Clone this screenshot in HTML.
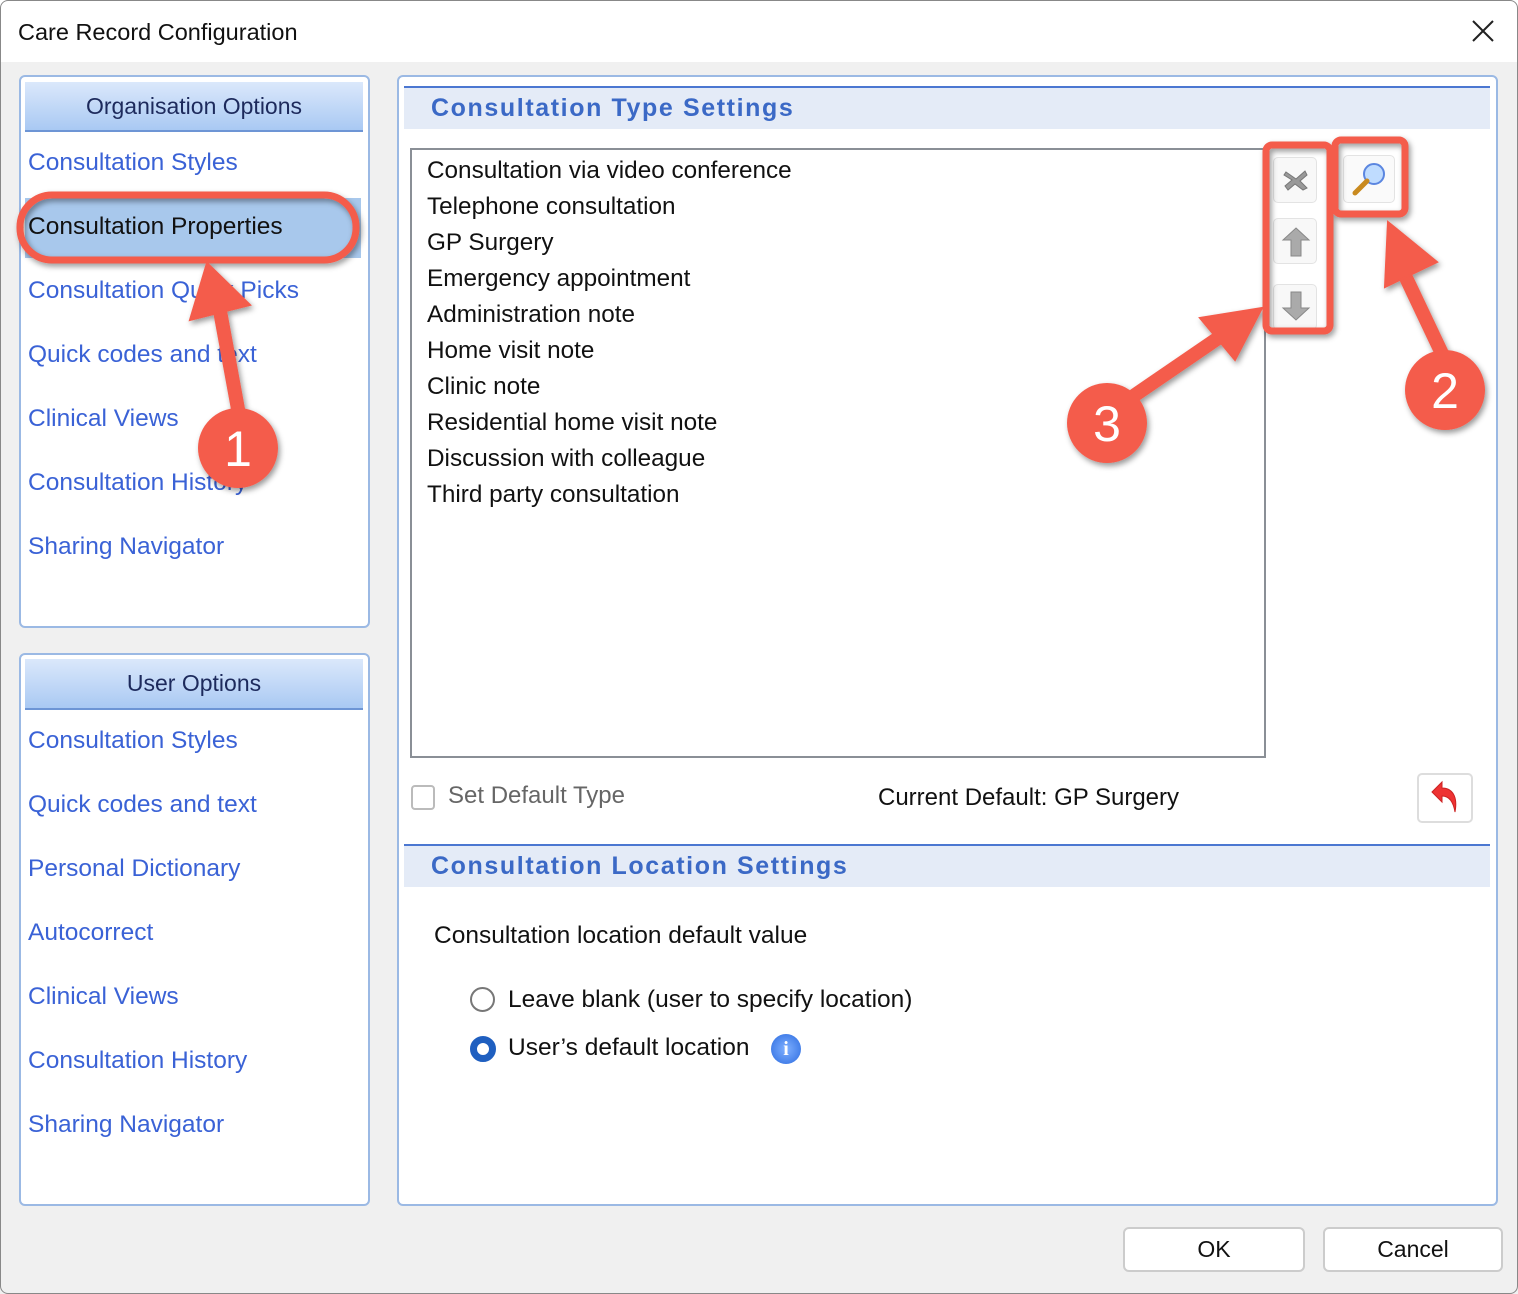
<!DOCTYPE html>
<html><head><meta charset="utf-8"><style>
*{margin:0;padding:0;box-sizing:border-box}
body{width:1518px;height:1294px;background:#fff;font-family:"Liberation Sans","DejaVu Sans",sans-serif;position:relative;overflow:hidden}
.a{position:absolute;white-space:nowrap}
#win{position:absolute;left:0;top:0;width:1518px;height:1294px;background:#f0f0f0;overflow:hidden}
#frame{position:absolute;left:0;top:0;width:1518px;height:1294px;border:1px solid #888;border-radius:8px}
#title{position:absolute;left:0;top:0;width:1518px;height:62px;background:#fff}
.panel{position:absolute;background:#fff;border:2px solid #9bb9e4;border-radius:6px}
.hdr{position:absolute;background:linear-gradient(#dbe8fb,#a9c9f3);border-bottom:2px solid #6d95d5;text-align:center;font-size:23px;color:#1d2a5c;line-height:48px}
.lnk{position:absolute;left:28px;font-size:24.5px;color:#3a62d6;line-height:30px}
.sec{position:absolute;left:404px;width:1086px;height:43px;background:#e4ebf7;border-top:2px solid #4b77d1;font-size:25px;letter-spacing:1.6px;font-weight:bold;color:#3b69c6;padding-left:27px;line-height:41px}
.li{position:absolute;left:427px;font-size:24.3px;color:#111;line-height:30px}
.btn{position:absolute;background:#fff;border:2px solid #ccc;border-radius:6px;text-align:center;font-size:23px;line-height:40px;color:#111}
.sb{position:absolute;width:44px;height:46px;background:#f8f8f8;border:1px solid #e3e3e3;border-radius:5px}
</style></head><body>
<div id="win">
<div id="title"></div>
<div class="a" style="left:18px;top:19px;font-size:23.5px;color:#111">Care Record Configuration</div>
<svg class="a" style="left:1470px;top:18px" width="26" height="26"><path d="M3 3L23 23M23 3L3 23" stroke="#222" stroke-width="2"/></svg>

<div class="panel" style="left:19px;top:75px;width:351px;height:553px"></div>
<div class="hdr" style="left:25px;top:82px;width:338px;height:50px">Organisation Options</div>
<div class="a" style="left:25px;top:198px;width:336px;height:60px;background:#a8c8ec"></div>
<div class="lnk" style="top:148px">Consultation Styles</div>
<div class="lnk" style="top:212px;color:#111">Consultation Properties</div>
<div class="lnk" style="top:276px">Consultation Quick Picks</div>
<div class="lnk" style="top:340px">Quick codes and text</div>
<div class="lnk" style="top:404px">Clinical Views</div>
<div class="lnk" style="top:468px">Consultation History</div>
<div class="lnk" style="top:532px">Sharing Navigator</div>

<div class="panel" style="left:19px;top:653px;width:351px;height:553px"></div>
<div class="hdr" style="left:25px;top:659px;width:338px;height:51px">User Options</div>
<div class="lnk" style="top:726px">Consultation Styles</div>
<div class="lnk" style="top:790px">Quick codes and text</div>
<div class="lnk" style="top:854px">Personal Dictionary</div>
<div class="lnk" style="top:918px">Autocorrect</div>
<div class="lnk" style="top:982px">Clinical Views</div>
<div class="lnk" style="top:1046px">Consultation History</div>
<div class="lnk" style="top:1110px">Sharing Navigator</div>

<div class="panel" style="left:397px;top:75px;width:1101px;height:1131px"></div>
<div class="sec" style="top:86px">Consultation Type Settings</div>
<div class="a" style="left:410px;top:148px;width:856px;height:610px;border:2px solid #8a8f96;background:#fff"></div>
<div class="li" style="top:156px">Consultation via video conference</div>
<div class="li" style="top:192px">Telephone consultation</div>
<div class="li" style="top:228px">GP Surgery</div>
<div class="li" style="top:264px">Emergency appointment</div>
<div class="li" style="top:300px">Administration note</div>
<div class="li" style="top:336px">Home visit note</div>
<div class="li" style="top:372px">Clinic note</div>
<div class="li" style="top:408px">Residential home visit note</div>
<div class="li" style="top:444px">Discussion with colleague</div>
<div class="li" style="top:480px">Third party consultation</div>

<div class="sb" style="left:1273px;top:157px"></div>
<div class="sb" style="left:1273px;top:218px"></div>
<div class="sb" style="left:1273px;top:284px"></div>
<svg class="a" style="left:1281px;top:165px" width="30" height="30"><path d="M5 7L15 14L24 6L26 10L19 16L26 23L22 25L14 19L7 25L4 21L11 15L3 10Z" fill="#999" stroke="#777"/></svg>
<svg class="a" style="left:1281px;top:226px" width="30" height="32"><path d="M15 2L28 14H20V30H10V14H2Z" fill="#aaa" stroke="#888"/></svg>
<svg class="a" style="left:1281px;top:290px" width="30" height="32"><path d="M10 2H20V18H28L15 30L2 18H10Z" fill="#aaa" stroke="#888"/></svg>
<div class="sb" style="left:1343px;top:155px;width:52px;height:48px;background:#fafafa"></div>
<svg class="a" style="left:1350px;top:160px" width="40" height="38"><circle cx="24" cy="14" r="10" fill="#bfdcff" stroke="#5b86e0" stroke-width="2"/><path d="M17 21L5 33" stroke="#c98a1f" stroke-width="5" stroke-linecap="round"/></svg>

<div class="a" style="left:411px;top:785px;width:24px;height:25px;border:2px solid #bbb;border-radius:4px;background:#fff"></div>
<div class="a" style="left:448px;top:782px;font-size:24px;color:#666">Set Default Type</div>
<div class="a" style="left:878px;top:784px;font-size:24px;color:#111">Current Default: GP Surgery</div>
<div class="sb" style="left:1417px;top:773px;width:56px;height:50px;background:#fff;border:2px solid #ddd"></div>
<svg class="a" style="left:1428px;top:780px" width="34" height="36"><path d="M4 12L14 2V8C24 8 30 16 27 32C25 20 20 16 14 16V22Z" fill="#e33" stroke="#c22"/></svg>

<div class="sec" style="top:844px">Consultation Location Settings</div>
<div class="a" style="left:434px;top:922px;font-size:24.5px;color:#111">Consultation location default value</div>
<div class="a" style="left:470px;top:987px;width:25px;height:25px;border:2px solid #777;border-radius:50%;background:#fff"></div>
<div class="a" style="left:508px;top:986px;font-size:24.5px;color:#111">Leave blank (user to specify location)</div>
<div class="a" style="left:470px;top:1036px;width:26px;height:26px;border:7px solid #1f5fc0;border-radius:50%;background:#fff"></div>
<div class="a" style="left:508px;top:1034px;font-size:24.5px;color:#111">User’s default location</div>
<div class="a" style="left:771px;top:1034px;width:30px;height:30px;border-radius:50%;background:radial-gradient(#7fb0ff,#2b6be0);color:#fff;font-weight:bold;font-size:20px;text-align:center;line-height:30px;font-family:'Liberation Serif',serif">i</div>

<div class="btn" style="left:1123px;top:1227px;width:182px;height:45px">OK</div>
<div class="btn" style="left:1323px;top:1227px;width:180px;height:45px">Cancel</div>
</div>
<div id="frame"></div>

<svg class="a" style="left:0;top:0" width="1518" height="1294">
<defs><filter id="s"><feDropShadow dx="2" dy="3" stdDeviation="3" flood-opacity="0.4"/></filter></defs>
<g filter="url(#s)" fill="#f45b4c" stroke="#f45b4c">
<rect x="20" y="195" width="336" height="65" rx="32" fill="none" stroke-width="7"/>
<rect x="1266" y="145" width="64" height="186" rx="6" fill="none" stroke-width="7"/>
<rect x="1335" y="140" width="70" height="74" rx="6" fill="none" stroke-width="7"/>
<path d="M240 420L218 300" stroke-width="14" stroke-linecap="round"/>
<path d="M207 263L250 305L190 320Z" stroke-width="2"/>
<path d="M1445 360L1400 265" stroke-width="14" stroke-linecap="round"/>
<path d="M1388 222L1437 262L1385 287Z" stroke-width="2"/>
<path d="M1135 395L1230 330" stroke-width="14" stroke-linecap="round"/>
<path d="M1262 308L1200 318L1235 360Z" stroke-width="2"/>
<circle cx="238" cy="448" r="40" stroke="none"/>
<circle cx="1445" cy="390" r="40" stroke="none"/>
<circle cx="1107" cy="423" r="40" stroke="none"/>
</g>
<g fill="#fff" font-family="Liberation Sans" font-size="50" text-anchor="middle">
<text x="238" y="466">1</text><text x="1445" y="408">2</text><text x="1107" y="441">3</text>
</g>
</svg>
</body></html>
